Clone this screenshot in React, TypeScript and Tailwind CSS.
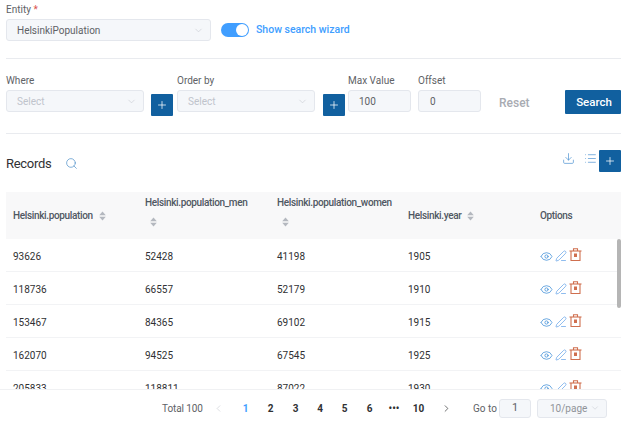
import { ChevronDown, ChevronLeft, ChevronRight, Download, Eye, List, PenLine, Plus, Search } from "lucide-react";

const rows = [
  ["93626", "52428", "41198", "1905"],
  ["118736", "66557", "52179", "1910"],
  ["153467", "84365", "69102", "1915"],
  ["162070", "94525", "67545", "1925"],
  ["205833", "118811", "87022", "1930"],
];

const SortCaret = () => (
  <svg width="7" height="10" viewBox="0 0 7 10" className="shrink-0 text-[#b4b8bf]" fill="currentColor">
    <path d="M3.5 0.5 6.8 4.2H0.2Z" />
    <path d="M3.5 9.5 0.2 5.8H6.8Z" />
  </svg>
);

const TrashIcon = () => (
  <svg width="13" height="13" viewBox="0 0 13 13" fill="none" stroke="#cf6f4f" strokeWidth="1.1" className="-mt-[3px]">
    <path d="M0.5 3H12.5" />
    <path d="M4.5 3V0.8H8.5V3" />
    <path d="M2 3V12.5H11V3" />
    <rect x="5" y="5.5" width="3" height="3.5" fill="#cf6f4f" stroke="none" />
  </svg>
);

const SelectBox = ({ text, className, dark }: { text: string; className: string; dark?: boolean }) => (
  <div className={`flex h-[22px] items-center justify-between rounded-[3px] border border-[#e4e7ed] bg-[#f5f7fa] pl-[10px] pr-[6px] ${className}`}>
    <span className={dark ? "text-[#606266]" : "text-[#c0c4cc]"}>{text}</span>
    <ChevronDown size={11} strokeWidth={1.2} className="text-[#c0c4cc]" />
  </div>
);

const AddButton = ({ className }: { className: string }) => (
  <button className={`flex h-[22px] w-[22px] items-center justify-center rounded-[1px] bg-[#11609f] text-white ${className}`}>
    <Plus size={12} strokeWidth={1.5} />
  </button>
);

const Label = ({ children }: { children: string }) => (
  <p className="mb-[2px] h-[14px] leading-[14px] text-[#606266]">{children}</p>
);

export default function App() {
  return (
    <div className="relative h-[424px] w-[629px] overflow-hidden bg-white pl-[6px] pr-[8px] text-[10px] font-['Roboto','Noto_Sans',sans-serif] text-[#303133]">
      <div className="h-[59px] border-b border-[#e9ebef] pt-[2px]">
        <p className="h-[15px] leading-[15px] text-[#606266]">
          Entity <span className="text-[#d9534f]">*</span>
        </p>
        <div className="mt-[2px] flex items-center">
          <SelectBox text="HelsinkiPopulation" className="w-[205px]" dark />
          <div className="ml-[10px] flex h-[14px] w-[28px] items-center justify-end rounded-full bg-[#409eff] pr-[1px]">
            <div className="h-[12px] w-[12px] rounded-full bg-white" />
          </div>
          <span className="ml-[7px] -mt-[1px] text-[10.5px] font-medium text-[#409eff]">Show search wizard</span>
        </div>
      </div>

      <div className="flex h-[75px] items-start border-b border-[#e9ebef] pt-[15px]">
        <div className="w-[138px]">
          <Label>Where</Label>
          <SelectBox text="Select" className="w-[138px]" />
        </div>
        <AddButton className="ml-[7px] mt-[20px]" />
        <div className="ml-[4px] w-[138px]">
          <Label>Order by</Label>
          <SelectBox text="Select" className="w-[138px]" />
        </div>
        <AddButton className="ml-[8px] mt-[20px]" />
        <div className="ml-[3px] w-[63px]">
          <Label>Max Value</Label>
          <div className="flex h-[22px] items-center rounded-[3px] border border-[#e4e7ed] bg-[#f5f7fa] pl-[10px] text-[#606266]">100</div>
        </div>
        <div className="ml-[7px] w-[63px]">
          <Label>Offset</Label>
          <div className="flex h-[22px] items-center rounded-[3px] border border-[#e4e7ed] bg-[#f5f7fa] pl-[11px] text-[#606266]">0</div>
        </div>
        <span className="ml-[18px] mt-[20px] text-[12px] font-medium leading-[18px] text-[#a8abb2]">Reset</span>
        <button className="ml-auto mt-[16px] h-[24px] w-[56px] rounded-[1px] bg-[#11609f] pl-[2px] pt-[1px] text-[11.5px] font-medium text-white">Search</button>
      </div>

      <div className="relative flex h-[58px] items-center pt-[1px]">
        <span className="w-[59px] text-[13px] tracking-[-0.3px] text-[#303133]">Records</span>
        <Search size={13} strokeWidth={1.2} className="text-[#3f86c4]" />
        <div className="absolute right-0 top-[16px] flex items-start">
          <Download size={13} strokeWidth={1.3} className="mr-[9px] mt-[2px] text-[#4f93d2]" />
          <List size={13} strokeWidth={1.3} className="mr-[2px] mt-[2px] text-[#4f93d2]" />
          <AddButton className="" />
        </div>
      </div>

      <div className="relative">
        <div className="grid h-[47px] grid-cols-[132px_132px_131px_132px_88px] items-center bg-[#f8f8f9] font-medium tracking-[-0.35px] text-[#4f5762] [&>div]:pl-[7px]">
          <div className="flex items-center gap-[6px]">Helsinki.population <SortCaret /></div>
          <div className="self-start pt-[4px]">
            <p className="leading-[14px]">Helsinki.population_men</p>
            <div className="mt-[7px] pl-[5px]"><SortCaret /></div>
          </div>
          <div className="self-start pt-[4px]">
            <p className="leading-[14px]">Helsinki.population_women</p>
            <div className="mt-[7px] pl-[5px]"><SortCaret /></div>
          </div>
          <div className="flex items-center gap-[6px]">Helsinki.year <SortCaret /></div>
          <div>Options</div>
        </div>
        {rows.map((row) => (
          <div key={row[0]} className="grid h-[33px] grid-cols-[132px_132px_131px_132px_88px] items-center border-b border-[#f2f3f5] pt-[2px] text-[#303133] [&>div]:pl-[7px]">
            {row.map((cell) => (
              <div key={cell}>{cell}</div>
            ))}
            <div className="flex items-center gap-[2px]">
              <Eye size={13} strokeWidth={1.4} className="text-[#3f8fd8]" />
              <PenLine size={12} strokeWidth={1.4} className="text-[#5f9fe6]" />
              <TrashIcon />
            </div>
          </div>
        ))}
        <div className="absolute right-0 top-[47px] h-[69px] w-[4px] rounded-full bg-[#b5b5b5]" />
      </div>

      {/* pagination sits over the table */}
      <div className="absolute bottom-0 left-0 flex h-[35px] w-[621px] items-center border-t border-[#f0f1f3] bg-white pl-[162px] pt-[2px] text-[#606266]">
        <span className="w-[40px] whitespace-nowrap tracking-[-0.1px]">Total 100</span>
        <ChevronLeft size={11} strokeWidth={1.2} className="ml-[11px] text-[#c0c4cc]" />
        <div className="ml-[9px] flex items-center font-bold text-[#303133]">
          <span className="w-[25px] text-center text-[#409eff]">1</span>
          <span className="w-[25px] text-center">2</span>
          <span className="w-[25px] text-center">3</span>
          <span className="w-[24px] text-center">4</span>
          <span className="w-[25px] text-center">5</span>
          <span className="w-[25px] text-center">6</span>
          <span className="w-[24px] text-center">•••</span>
          <span className="w-[25px] text-center">10</span>
        </div>
        <ChevronRight size={11} strokeWidth={1.5} className="ml-[10px] text-[#303133]" />
        <span className="ml-[21px] w-[22px] whitespace-nowrap">Go to</span>
        <div className="ml-[4px] flex h-[19px] w-[32px] items-center justify-center rounded-[3px] border border-[#e4e7ed] bg-[#f5f7fa] text-[11px]">1</div>
        <div className="ml-[6px] flex h-[19px] w-[70px] items-center justify-between rounded-[3px] border border-[#e4e7ed] bg-[#f5f7fa] pl-[12px] pr-[6px] text-[#909399]">
          10/page
          <ChevronDown size={10} strokeWidth={1.2} className="text-[#c0c4cc]" />
        </div>
      </div>
    </div>
  );
}
